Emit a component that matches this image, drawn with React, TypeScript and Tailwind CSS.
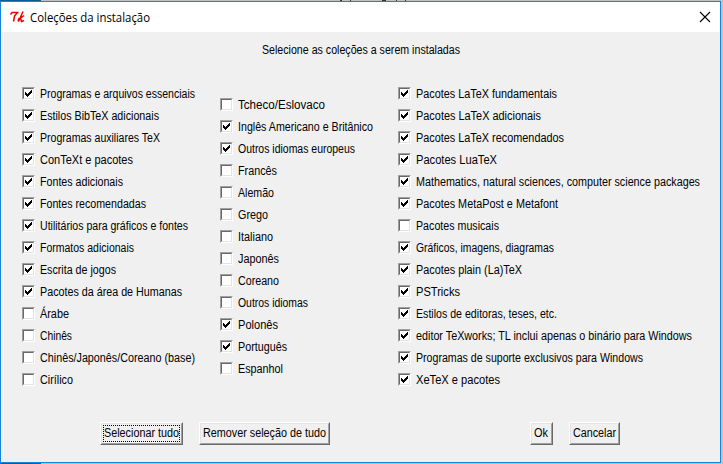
import { useLayoutEffect, useRef } from "react";

function Fit({ text, w }: { text: string; w: number }) {
  const ref = useRef<HTMLSpanElement>(null);
  useLayoutEffect(() => {
    const el = ref.current!;
    el.style.transform = "none";
    const natural = el.getBoundingClientRect().width;
    el.style.transform = `scaleX(${w / natural})`;
  }, [text, w]);
  return (
    <span className="block" style={{ width: w }}>
      <span ref={ref} className="inline-block origin-left whitespace-pre">{text}</span>
    </span>
  );
}

type Item = [string, number, boolean];

const left: Item[] = [
  ["Programas e arquivos essenciais", 155, true],
  ["Estilos BibTeX adicionais", 119, true],
  ["Programas auxiliares TeX", 120, true],
  ["ConTeXt e pacotes", 93, true],
  ["Fontes adicionais", 83, true],
  ["Fontes recomendadas", 106, true],
  ["Utilitários para gráficos e fontes", 148, true],
  ["Formatos adicionais", 94, true],
  ["Escrita de jogos", 76, true],
  ["Pacotes da área de Humanas", 142, true],
  ["Árabe", 29, false],
  ["Chinês", 32, false],
  ["Chinês/Japonês/Coreano (base)", 155, false],
  ["Cirílico", 33, false],
];
const middle: Item[] = [
  ["Tcheco/Eslovaco", 87, false],
  ["Inglês Americano e Britânico", 135, true],
  ["Outros idiomas europeus", 117, true],
  ["Francês", 39, false],
  ["Alemão", 36, false],
  ["Grego", 30, false],
  ["Italiano", 35, false],
  ["Japonês", 41, false],
  ["Coreano", 41, false],
  ["Outros idiomas", 70, false],
  ["Polonês", 40, true],
  ["Português", 49, true],
  ["Espanhol", 45, false],
];
const right: Item[] = [
  ["Pacotes LaTeX fundamentais", 141, true],
  ["Pacotes LaTeX adicionais", 125, true],
  ["Pacotes LaTeX recomendados", 148, true],
  ["Pacotes LuaTeX", 81, true],
  ["Mathematics, natural sciences, computer science packages", 284, true],
  ["Pacotes MetaPost e Metafont", 142, true],
  ["Pacotes musicais", 83, false],
  ["Gráficos, imagens, diagramas", 138, true],
  ["Pacotes plain (La)TeX", 106, true],
  ["PSTricks", 44, true],
  ["Estilos de editoras, teses, etc.", 141, true],
  ["editor TeXworks; TL inclui apenas o binário para Windows", 276, true],
  ["Programas de suporte exclusivos para Windows", 227, true],
  ["XeTeX e pacotes", 84, true],
];

function Column({ items, className }: { items: Item[]; className: string }) {
  return (
    <div className={className}>
      {items.map(([label, w, on]) => (
        <div key={label} className="flex h-[22px] items-center">
          <span className="mr-[5px] mb-px h-[13px] w-[13px] shrink-0 border border-t-[#a0a0a0] border-r-white border-b-white border-l-[#a0a0a0]">
            <span className="block h-[11px] w-[11px] border border-t-[#696969] border-r-[#e3e3e3] border-b-[#e3e3e3] border-l-[#696969] bg-white">
              {on && (
                <svg width="9" height="9" viewBox="0 0 9 9" shapeRendering="crispEdges">
                  <path d="M1 3h1v1h1v1h1v-1h1v-1h1v-1h1v-1h1v3h-1v1h-1v1h-1v1h-1v1h-1v-1h-1v-1h-1z" />
                </svg>
              )}
            </span>
          </span>
          <Fit text={label} w={w} />
        </div>
      ))}
    </div>
  );
}

function Button({ label, w, focused, className }: { label: string; w: number; focused?: boolean; className: string }) {
  return (
    <button className={`h-[23px] border border-t-white border-r-[#696969] border-b-[#696969] border-l-white ${className}`}>
      <span className="flex h-full items-center border border-t-[#e3e3e3] border-r-[#a0a0a0] border-b-[#a0a0a0] border-l-[#e3e3e3] p-px text-left">
        <span className={`flex h-full w-full items-center border border-dotted ${focused ? "border-black" : "border-transparent"}`}>
          <Fit text={label} w={w} />
        </span>
      </span>
    </button>
  );
}

export default function App() {
  return (
    <div className="h-[464px] w-[723px] overflow-hidden bg-[#c2c2c2] font-['Liberation_Sans',Arial,sans-serif] text-[12px] leading-[15px] text-black">
      <div className="flex h-px">
        <div className="w-[41px] bg-[#0a5d94]" />
        <div className="ml-[299px] w-[2px] bg-[#333]" />
        <div className="ml-[8px] w-px bg-[#333]" />
        <div className="ml-[31px] w-[4px] bg-[#333]" />
        <div className="ml-[10px] w-px bg-[#333]" />
        <div className="ml-[8px] w-px bg-[#333]" />
      </div>
      <div className="flex h-[462px] w-[721px] flex-col border border-[#1883d7] bg-[#f0f0f0]">
        <header className="flex h-[30px] shrink-0 items-center bg-white pr-[9px] pl-[9px] font-['Open_Sans',sans-serif]">
          <svg width="15" height="12" viewBox="0 0 15 12" fill="none" stroke="#f00000" strokeWidth="1.5">
            <path d="M0.5 3.5L2 1.5H8.5M7.5 1.5L4.5 5L3.5 10.5M13 0.5L8.5 10.5M8 10.5L9 7M14 4.5L10 7.5M10.5 7L11.5 10.5L14 9.5" />
          </svg>
          <span className="ml-[5px]"><Fit text="Coleções da instalação" w={120} /></span>
          <svg className="ml-auto" width="12" height="12" viewBox="0 0 12 12" stroke="black" strokeWidth="1.1">
            <path d="M1 1L11 11M11 1L1 11" />
          </svg>
        </header>
        <div className="mt-[11px] pl-[261px]"><Fit text="Selecione as coleções a serem instaladas" w={198} /></div>
        <main className="mt-[25px] flex h-[308px] items-center pl-[21px]">
          <Column items={left} className="w-[198px]" />
          <Column items={middle} className="w-[178px]" />
          <Column items={right} className="w-[310px]" />
        </main>
        <footer className="mt-[31px] flex pl-[99px]">
          <Button label="Selecionar tudo" w={75} focused className="w-[83px]" />
          <Button label="Remover seleção de tudo" w={123} className="ml-[16px] w-[131px]" />
          <Button label="Ok" w={14} className="ml-[200px] w-[23px]" />
          <Button label="Cancelar" w={43} className="ml-[16px] w-[51px]" />
        </footer>
      </div>
      <div className="h-px w-[41px] bg-[#0a5d94]" />
    </div>
  );
}
